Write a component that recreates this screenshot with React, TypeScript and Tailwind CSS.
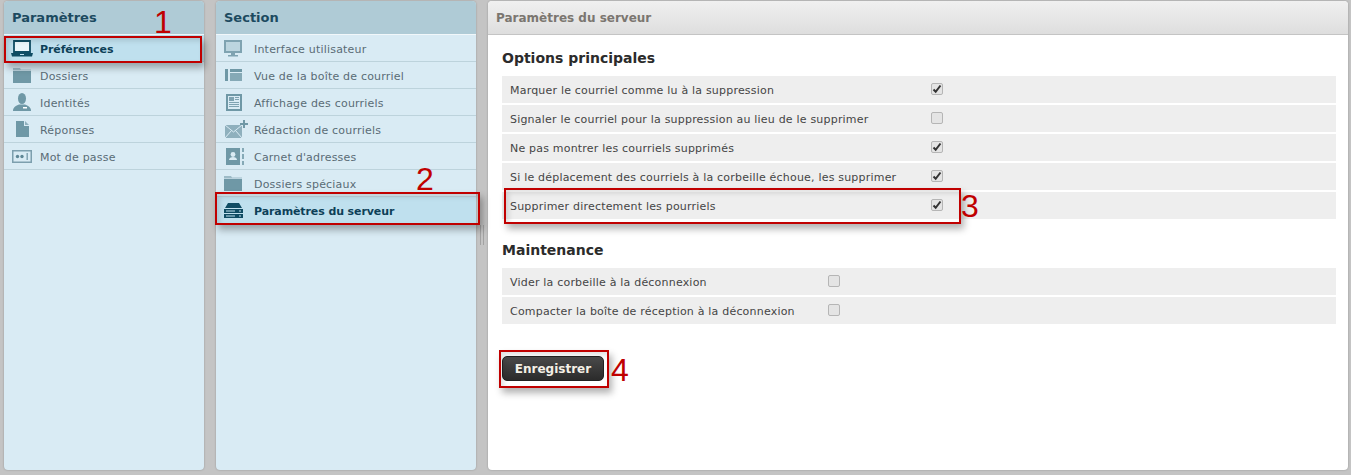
const uiFont = "font-['DejaVu_Sans',Verdana,sans-serif]";

function LaptopIcon() {
  return (
    <svg width="22" height="17" viewBox="0 0 22 17">
      <path d="M3 1h16v11H3z" fill="#eaf5fa" stroke="#0f4c63" strokeWidth="1.8" />
      <path d="M0 13h22l-1 3.5H1z" fill="#0f4c63" />
      <path d="M9 14h4v1H9z" fill="#bfe0ee" />
    </svg>
  );
}
function FolderIcon() {
  return (
    <svg width="18" height="15" viewBox="0 0 18 15">
      <path d="M0 0h7l1 1.5h10v1H0z" fill="#9dbbc7" />
      <path d="M0 3h18v12H0z" fill="#6f98a6" />
    </svg>
  );
}
function PersonIcon() {
  return (
    <svg width="18" height="18" viewBox="0 0 18 18">
      <ellipse cx="9" cy="5.5" rx="4" ry="5.5" fill="#6f98a6" />
      <path d="M0 18c0-4 3-5.5 6-6.5h6c3 1 6 2.5 6 6.5z" fill="#6f98a6" />
      <path d="M10 14h4v1.4h-4z" fill="#fff" />
    </svg>
  );
}
function PageIcon() {
  return (
    <svg width="13" height="16" viewBox="0 0 13 16">
      <path d="M0 0h8v5h5v11H0z" fill="#6f98a6" />
      <path d="M9 0l4 4H9z" fill="#8fb0bd" />
    </svg>
  );
}
function PasswordIcon() {
  return (
    <svg width="20" height="13" viewBox="0 0 20 13">
      <rect x="0.75" y="0.75" width="18.5" height="11.5" fill="#d9ebf4" stroke="#7d9fae" strokeWidth="1.5" />
      <circle cx="5.5" cy="6.5" r="1.7" fill="#5f8796" />
      <circle cx="10" cy="6.5" r="1.7" fill="#5f8796" />
      <path d="M14.5 3h1.4v7h-1.4z" fill="#7d9fae" />
    </svg>
  );
}
function MonitorIcon() {
  return (
    <svg width="18" height="17" viewBox="0 0 18 17">
      <rect x="1" y="1" width="16" height="11" fill="#bcd5df" stroke="#7fa3b1" strokeWidth="2" />
      <path d="M7 13h4v2H7zM4 15h10v1.5H4z" fill="#7fa3b1" />
    </svg>
  );
}
function LayoutIcon() {
  return (
    <svg width="17" height="12" viewBox="0 0 17 12">
      <path d="M0 0h3v12H0z" fill="#6f98a6" />
      <path d="M5 0h12v3H5z" fill="#6f98a6" />
      <path d="M5 4h12v8H5z" fill="#85a9b6" />
    </svg>
  );
}
function NewsIcon() {
  return (
    <svg width="16" height="17" viewBox="0 0 16 17">
      <rect width="16" height="17" fill="#6f98a6" />
      <path d="M2 2h12v13H2z" fill="#d9ebf4" />
      <path d="M3 3h5v4H3zM9 3h4v1H9zM9 5h4v1H9zM3 8h10v1H3zM3 10h10v1H3zM3 12h10v1H3z" fill="#7fa3b1" />
    </svg>
  );
}
function MailPlusIcon() {
  return (
    <svg width="23" height="18" viewBox="0 0 23 18">
      <path d="M0 5h17v13H0z" fill="#8fb0bd" />
      <path d="M0 5l8.5 7L17 5M0 18l6.5-7.5M17 18l-6.5-7.5" fill="none" stroke="#d9ebf4" strokeWidth="1" />
      <path d="M18 0h2v3h3v2h-3v3h-2V5h-3V3h3z" fill="#6f98a6" />
    </svg>
  );
}
function ContactsIcon() {
  return (
    <svg width="19" height="17" viewBox="0 0 19 17">
      <path d="M0 0h14v17H0z" fill="#6f98a6" />
      <circle cx="7" cy="6.5" r="2.4" fill="#d9ebf4" />
      <path d="M3 12c0-2 2-3 4-3s4 1 4 3z" fill="#d9ebf4" />
      <path d="M16 0h2v4h-2zM16 6h2v5h-2zM16 13h2v4h-2z" fill="#85a9b6" />
    </svg>
  );
}
function ServerIcon() {
  return (
    <svg width="19" height="15" viewBox="0 0 19 15">
      <path d="M4 0h11l3 5H1z" fill="#0f4c63" />
      <path d="M0 6h19v4H0zM0 11h19v4H0z" fill="#0f4c63" />
      <path d="M2 7.5h9v1H2zM2 12.5h9v1H2zM15 7.5h2v1h-2zM15 12.5h2v1h-2z" fill="#bfe0ee" />
    </svg>
  );
}

function NavRow({ icon, label, active, section }: { icon: React.ReactNode; label: string; active?: boolean; section?: boolean }) {
  return (
    <div
      className={`flex h-[27px] items-center border-b border-[#bdd3dc] ${
        active ? "bg-[#bfe0ee] font-bold tracking-[-0.1px] text-[#0d4058]" : "tracking-[0.2px] text-[#5a6c76]"
      }`}
    >
      <div className={`flex shrink-0 justify-center ${section ? "mr-1 w-[34px]" : "w-9"}`}>{icon}</div>
      <span className="pt-1 text-[11px]">{label}</span>
    </div>
  );
}

function Panel({ title, width, children }: { title: string; width: string; children: React.ReactNode }) {
  return (
    <div className={`flex ${width} flex-col overflow-hidden rounded-[4px] bg-[#d9ebf4] shadow-[0_0_2px_#8f8f8f]`}>
      <div className="flex h-[34px] items-center border-b border-[#f1f7fa] bg-[#afcbd6] pl-2 text-[13px] font-bold text-[#1c4a60]">
        {title}
      </div>
      {children}
    </div>
  );
}

function Check({ checked }: { checked?: boolean }) {
  return (
    <div className="mb-0.5 flex h-3 w-3 items-center justify-center rounded-[2px] border border-[#b5b5b5] bg-[#e4e4e4]">
      {checked && (
        <svg width="10" height="10" viewBox="0 0 10 10">
          <path d="M1.5 5.5l2.2 2.3L8.5 1.5" fill="none" stroke="#333" strokeWidth="2" />
        </svg>
      )}
    </div>
  );
}

function OptionRow({ label, checked, labelWidth }: { label: string; checked?: boolean; labelWidth: string }) {
  return (
    <div className="mb-0.5 flex h-[27px] items-center bg-[#eeeeee] pl-2 text-[11px] tracking-[0.2px] text-[#454545]">
      <div className={`pt-1 ${labelWidth}`}>{label}</div>
      <Check checked={checked} />
    </div>
  );
}

function Callout({ className }: { className: string }) {
  return (
    <div
      className={`absolute border-[2px] border-[#c00000] shadow-[3px_5px_7px_rgba(0,0,0,0.3),inset_3px_3px_5px_rgba(0,0,0,0.12)] ${className}`}
    />
  );
}

function CalloutNumber({ n, className }: { n: string; className: string }) {
  return (
    <div className={`absolute font-['Liberation_Sans',Arial,sans-serif] text-[32px] leading-none text-[#c00000] ${className}`}>
      {n}
    </div>
  );
}

export default function App() {
  return (
    <div className={`relative h-[475px] w-[1351px] overflow-hidden bg-[#c4c4c4] ${uiFont}`}>
      <div className="flex h-[470px] items-stretch gap-3 pt-px pl-1">
        <Panel title="Paramètres" width="w-[200px]">
          <NavRow icon={<LaptopIcon />} label="Préférences" active />
          <NavRow icon={<FolderIcon />} label="Dossiers" />
          <NavRow icon={<PersonIcon />} label="Identités" />
          <NavRow icon={<PageIcon />} label="Réponses" />
          <NavRow icon={<PasswordIcon />} label="Mot de passe" />
        </Panel>

        <Panel title="Section" width="w-[260px]">
          <NavRow section icon={<MonitorIcon />} label="Interface utilisateur" />
          <NavRow section icon={<LayoutIcon />} label="Vue de la boîte de courriel" />
          <NavRow section icon={<div className="ml-0.5"><NewsIcon /></div>} label="Affichage des courriels" />
          <NavRow section icon={<div className="ml-1.5"><MailPlusIcon /></div>} label="Rédaction de courriels" />
          <NavRow section icon={<div className="ml-1"><ContactsIcon /></div>} label="Carnet d'adresses" />
          <NavRow section icon={<FolderIcon />} label="Dossiers spéciaux" />
          <NavRow section icon={<ServerIcon />} label="Paramètres du serveur" active />
        </Panel>

        <div className="flex w-[860px] flex-col overflow-hidden rounded-[4px] bg-white shadow-[0_0_2px_#8f8f8f]">
          <div className="flex h-[34px] items-center border-b border-[#c4c4c4] bg-gradient-to-b from-[#f0f0f0] to-[#dedede] pl-2 text-[12px] font-bold text-[#7b7670]">
            Paramètres du serveur
          </div>
          <div className="pr-3 pl-3.5">
            <h2 className="mt-[13px] mb-2 text-[14px] leading-[20px] font-bold text-[#2b2b2b]">Options principales</h2>
            <OptionRow labelWidth="w-[421px]" checked label="Marquer le courriel comme lu à la suppression" />
            <OptionRow labelWidth="w-[421px]" label="Signaler le courriel pour la suppression au lieu de le supprimer" />
            <OptionRow labelWidth="w-[421px]" checked label="Ne pas montrer les courriels supprimés" />
            <OptionRow labelWidth="w-[421px]" checked label="Si le déplacement des courriels à la corbeille échoue, les supprimer" />
            <OptionRow labelWidth="w-[421px]" checked label="Supprimer directement les pourriels" />

            <h2 className="mt-[21px] mb-2 text-[14px] leading-[20px] font-bold text-[#2b2b2b]">Maintenance</h2>
            <OptionRow labelWidth="w-[318px]" label="Vider la corbeille à la déconnexion" />
            <OptionRow labelWidth="w-[318px]" label="Compacter la boîte de réception à la déconnexion" />

            <button className="mt-[30px] h-[25px] w-[102px] rounded-[5px] border border-[#222] bg-gradient-to-b from-[#4a4a4a] to-[#2b2b2b] text-[12px] font-bold text-[#f4f0e6]">
              Enregistrer
            </button>
          </div>
        </div>
      </div>

      {/* splitter grip */}
      <div className="absolute top-[225px] left-[480px] h-5 w-1 border-x border-[#a2a2a2]" />

      {/* annotations */}
      <Callout className="top-9 left-1 h-[27px] w-[198px]" />
      <Callout className="top-[192px] left-[215px] h-[33px] w-[265px]" />
      <Callout className="top-[188px] left-[504px] h-9 w-[457px]" />
      <Callout className="top-[350px] left-[499px] h-[38px] w-[110px]" />
      <CalloutNumber n="1" className="top-[6px] left-[154px]" />
      <CalloutNumber n="2" className="top-[163px] left-[416px]" />
      <CalloutNumber n="3" className="top-[190px] left-[961px]" />
      <CalloutNumber n="4" className="top-[354px] left-[611px]" />
    </div>
  );
}
